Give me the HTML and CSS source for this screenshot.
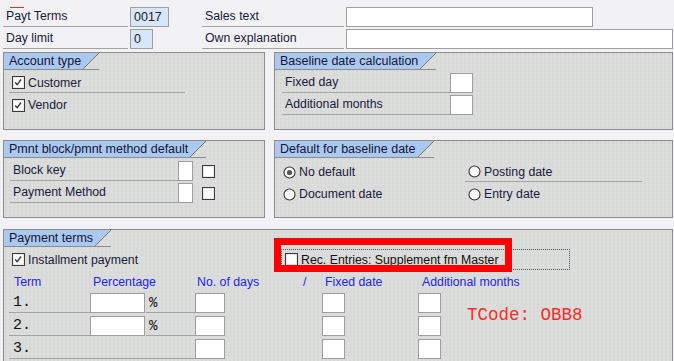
FILE: index.html
```html
<!DOCTYPE html>
<html lang="en">
<head>
    <meta charset="UTF-8">
    <title>Payment Terms - OBB8</title>
    <link rel="stylesheet" href="styles.css">
</head>
<body>
    <!-- Header fields -->
    <div class="top">
        <span class="flbl req">Payt Terms</span>
        <span class="inp key w39">0017</span>
        <span class="flbl">Sales text</span>
        <span class="inp w247"></span>

        <span class="flbl">Day limit</span>
        <span class="inp key w23">0</span>
        <span class="flbl">Own explanation</span>
        <span class="inp w327"></span>
    </div>

    <div class="groups">
        <!-- Account type -->
        <div class="group">
            <div class="tab"><span>Account type</span></div>
            <div class="row line w176">
                <span class="chk on"><svg viewBox="0 0 13 13"><polyline points="2.5,6.5 5,9 9.5,3"/></svg></span>
                <span>Customer</span>
            </div>
            <div class="row w176">
                <span class="chk on"><svg viewBox="0 0 13 13"><polyline points="2.5,6.5 5,9 9.5,3"/></svg></span>
                <span>Vendor</span>
            </div>
        </div>

        <!-- Baseline date calculation -->
        <div class="group">
            <div class="tab"><span>Baseline date calculation</span></div>
            <div class="row in7">
                <span class="plbl line w168">Fixed day</span>
                <span class="inp w23"></span>
            </div>
            <div class="row in7">
                <span class="plbl line w168">Additional months</span>
                <span class="inp w23"></span>
            </div>
        </div>

        <!-- Pmnt block -->
        <div class="group">
            <div class="tab"><span>Pmnt block/pmnt method default</span></div>
            <div class="row in6">
                <span class="plbl line w168">Block key</span>
                <span class="inp w15"></span>
                <span class="chk sp9"></span>
            </div>
            <div class="row in6">
                <span class="plbl line w168">Payment Method</span>
                <span class="inp w15"></span>
                <span class="chk sp9"></span>
            </div>
        </div>

        <!-- Default for baseline date -->
        <div class="group">
            <div class="tab"><span>Default for baseline date</span></div>
            <div class="radios">
                <label class="rad"><svg viewBox="0 0 13 13"><circle cx="6.5" cy="6.5" r="5.5"/><circle class="dot" cx="6.5" cy="6.5" r="2.6"/></svg>No default</label>
                <label class="rad line"><svg viewBox="0 0 13 13"><circle cx="6.5" cy="6.5" r="5.5"/></svg>Posting date</label>
                <label class="rad"><svg viewBox="0 0 13 13"><circle cx="6.5" cy="6.5" r="5.5"/></svg>Document date</label>
                <label class="rad"><svg viewBox="0 0 13 13"><circle cx="6.5" cy="6.5" r="5.5"/></svg>Entry date</label>
            </div>
        </div>

        <!-- Payment terms -->
        <div class="group wide">
            <div class="tab"><span>Payment terms</span></div>
            <div class="inst">
                <div class="row">
                    <span class="chk on"><svg viewBox="0 0 13 13"><polyline points="2.5,6.5 5,9 9.5,3"/></svg></span>
                    <span>Installment payment</span>
                </div>
                <div class="focus">
                    <span class="chk"></span>
                    <span>Rec. Entries: Supplement fm Master</span>
                </div>
            </div>

            <div class="terms">
                <span class="hd c1">Term</span>
                <span class="hd c2">Percentage</span>
                <span class="hd c4">No. of days</span>
                <span class="hd c5">/</span>
                <span class="hd c6">Fixed date</span>
                <span class="hd c8">Additional months</span>

                <span class="num line">1.</span>
                <span class="inp"></span>
                <span class="pct line">%</span>
                <span class="inp c4"></span>
                <span class="inp c6"></span>
                <span class="inp c8"></span>

                <span class="tcode">TCode: OBB8</span>

                <span class="num line">2.</span>
                <span class="inp"></span>
                <span class="pct line">%</span>
                <span class="inp c4"></span>
                <span class="inp c6"></span>
                <span class="inp c8"></span>

                <span class="num line span3">3.</span>
                <span class="inp c4"></span>
                <span class="inp c6"></span>
                <span class="inp c8"></span>
            </div>

            <div class="mark"></div>
        </div>
    </div>
</body>
</html>
```

FILE: styles.css
```css
body {
    margin: 0;
    background: #f2f1f4;
    font-family: "Liberation Sans", Arial, sans-serif;
    font-size: 12px;
    color: #1a1a3c;
}
.top {
    display: grid;
    grid-template-columns: 127px 72px 144px 1fr;
    grid-template-rows: 20px 20px;
    row-gap: 2px;
    padding: 7px 0 0 3px;
}
.flbl {
    position: relative;
    width: 125px;
    box-sizing: border-box;
    padding-left: 3px;
    line-height: 19px;
    font-size: 12.3px;
    border-bottom: 1px solid #a3a3a3;
}
.top .flbl:nth-child(3),
.top .flbl:nth-child(7) {
    width: 142px;
}
.req::before {
    content: "";
    position: absolute;
    left: 7px;
    top: 0;
    width: 14px;
    height: 1px;
    background: #e03030;
}
.inp {
    display: block;
    box-sizing: border-box;
    height: 20px;
    background: #fff;
    border: 1px solid #9e9e9e;
    padding: 0 3px;
    line-height: 18px;
    font-size: 12.5px;
    color: #222;
}
.key {
    background: #d8e6fa;
}
.w15 { width: 15px; }
.w23 { width: 23px; }
.w39 { width: 39px; }
.w247 { width: 247px; }
.w327 { width: 327px; }
.w168 { width: 168px; }
.w176 { width: 176px; }
.line {
    border-bottom: 1px solid #a3a3a3;
}

/* Group boxes */
.groups {
    display: grid;
    grid-template-columns: 262px 399px;
    column-gap: 9px;
    row-gap: 10px;
    margin: 3px 0 0 3px;
}
.group {
    position: relative;
    height: 78px;
    box-sizing: border-box;
    border: 1px solid #8c8c8c;
    background-color: #dcdcdc;
    background-image: radial-gradient(rgba(150, 200, 150, 0.25) 0.5px, transparent 0.9px);
    background-size: 4px 4px;
}
.group.wide {
    grid-column: 1 / 3;
    height: 140px;
    margin-top: 1px;
}
.tab {
    display: flex;
    height: 16px;
    border-bottom: 1px solid #8c8c8c;
    width: max-content;
}
.tab span {
    background: #abc9ef;
    padding: 0 2px 0 5px;
    line-height: 16px;
    font-size: 12.5px;
    color: #141438;
}
.tab::after {
    content: "";
    width: 16px;
    background: linear-gradient(to top left, transparent calc(50% - 0.7px), #777 50%, #abc9ef calc(50% + 0.7px));
}
.row {
    display: flex;
    align-items: center;
    height: 20px;
    margin: 3px 0 0 5px;
    box-sizing: border-box;
    padding-left: 3px;
    font-size: 12.3px;
}
.row + .row {
    margin-top: 2px;
}
.in7 { margin-left: 7px; padding-left: 0; }
.in6 { margin-left: 6px; padding-left: 0; }
.plbl {
    box-sizing: border-box;
    height: 20px;
    line-height: 19px;
    padding-left: 3px;
}
.chk {
    display: inline-block;
    width: 13px;
    height: 13px;
    box-sizing: border-box;
    border: 1px solid #3a3a3a;
    background: #fff;
    box-shadow: inset 0 0 0 1px #e8e8e8;
    margin-right: 3px;
    flex-shrink: 0;
}
.chk svg {
    display: block;
    width: 11px;
    height: 11px;
}
.chk polyline {
    fill: none;
    stroke: #3a3a3a;
    stroke-width: 1.7;
}
.sp9 {
    margin-left: 9px;
}

/* Radio buttons */
.radios {
    display: grid;
    grid-template-columns: 182px 177px;
    grid-auto-rows: 20px;
    row-gap: 2px;
    margin: 4px 0 0 8px;
    font-size: 12.3px;
}
.rad {
    display: flex;
    align-items: center;
    box-sizing: border-box;
}
.rad:nth-child(even) {
    padding-left: 3px;
}
.rad svg {
    width: 13px;
    height: 13px;
    margin-right: 3px;
}
.rad circle {
    fill: #fff;
    stroke: #333;
    stroke-width: 1.1;
}
.rad circle.dot {
    fill: #555;
    stroke: none;
}

/* Payment terms */
.inst {
    display: grid;
    grid-template-columns: 277px 289px;
    height: 21px;
    margin-top: 2px;
}
.inst .row {
    margin: 0 0 0 5px;
    height: 21px;
}
.focus {
    display: flex;
    align-items: center;
    box-sizing: border-box;
    border: 1px dotted #555;
    padding-left: 3px;
    font-size: 12.3px;
    color: #111;
}
.focus .chk {
    margin-right: 3px;
}
.terms {
    display: grid;
    grid-template-columns: 81px 55px 50px 30px 97px 23px 73px 23px 150px;
    grid-template-rows: 16px 20px 20px 20px;
    row-gap: 3px;
    margin: 4px 0 0 5px;
}
.hd {
    color: #2424f2;
    white-space: nowrap;
    line-height: 16px;
    font-size: 12.3px;
}
.c1 { grid-column: 1; padding-left: 5px; }
.c2 { grid-column: 2; padding-left: 3px; }
.c4 { grid-column: 4; }
.hd.c4 { padding-left: 2px; }
.c5 { grid-column: 5; }
.hd.c5 { padding-left: 78px; }
.c6 { grid-column: 6; }
.hd.c6 { padding-left: 3px; }
.c8 { grid-column: 8; }
.hd.c8 { padding-left: 4px; }
.terms .inp {
    width: auto;
}
.num, .pct {
    font-family: "Liberation Mono", "Courier New", monospace;
    line-height: 20px;
    color: #111;
    box-sizing: border-box;
}
.num {
    grid-column: 1;
    padding-left: 4px;
    font-size: 15px;
}
.pct {
    margin-left: 1px;
    padding-left: 3px;
    font-size: 14px;
}
.span3 {
    grid-column: 1 / 4;
}
.tcode {
    grid-column: 9;
    grid-row: 2 / 4;
    align-self: center;
    padding-left: 26px;
    font-family: "Liberation Mono", "Courier New", monospace;
    font-size: 17.5px;
    color: #ff2a2a;
    white-space: nowrap;
}

/* Red highlight annotation */
.mark {
    position: absolute;
    left: 270px;
    top: 8px;
    width: 238px;
    height: 34px;
    box-sizing: border-box;
    border: 7px solid #ff0000;
}
```
